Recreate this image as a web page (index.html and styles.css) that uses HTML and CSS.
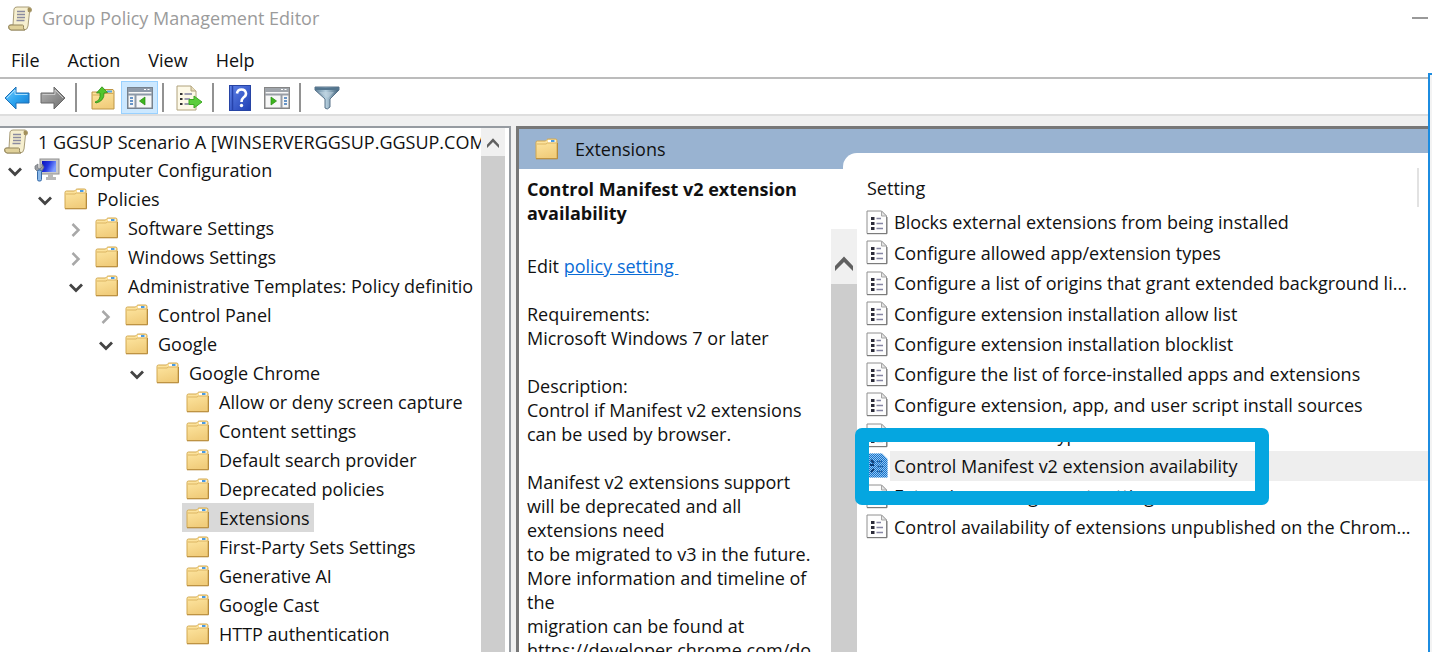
FILE: index.html
```html
<!DOCTYPE html>
<html lang="en">
<head>
<meta charset="utf-8">
<title>Group Policy Management Editor</title>
<link rel="stylesheet" href="styles.css">
</head>
<body>
<svg class="defs" aria-hidden="true">
  <defs>
    <linearGradient id="g-folder" x1="0" y1="0" x2="0.3" y2="1"><stop offset="0" stop-color="#ffe9a6"/><stop offset="1" stop-color="#f1cd7c"/></linearGradient>
    <linearGradient id="g-blue" x1="0" y1="0" x2="1" y2="1"><stop offset="0" stop-color="#7fd0ff"/><stop offset=".5" stop-color="#2da5f0"/><stop offset="1" stop-color="#1478cc"/></linearGradient>
    <linearGradient id="g-gray" x1="0" y1="0" x2="1" y2="1"><stop offset="0" stop-color="#b5b5b5"/><stop offset="1" stop-color="#6d6d6d"/></linearGradient>
    <linearGradient id="g-help" x1="0" y1="0" x2="1" y2="1"><stop offset="0" stop-color="#5f83e8"/><stop offset="1" stop-color="#1f3fb4"/></linearGradient>
    <linearGradient id="g-screen" x1="0" y1="0" x2="1" y2="0.4"><stop offset="0" stop-color="#0a12b8"/><stop offset=".5" stop-color="#2336e0"/><stop offset="1" stop-color="#7e9cff"/></linearGradient>
    <linearGradient id="g-funnel" x1="0" y1="0" x2="1" y2="0"><stop offset="0" stop-color="#5d7f98"/><stop offset=".45" stop-color="#b7d0df"/><stop offset="1" stop-color="#3f6079"/></linearGradient>
    <pattern id="p-dots" width="2" height="2" patternUnits="userSpaceOnUse"><rect width="1" height="1" fill="#1673cc"/><rect x="1" y="1" width="1" height="1" fill="#1673cc"/></pattern>
  </defs>
  <symbol id="folder" viewBox="0 0 23 22">
    <path d="M1 4.500Q1 3 2.500 3H10.500L12 1.500Q12.500 1 13.500 1H20.500Q22 1 22 2.500V20.500H1Z" fill="url(#g-folder)" stroke="#d2a850"/>
    <rect x="13" y="2" width="7.500" height="2.500" fill="#fff"/><rect x="16" y="2" width="3.500" height="2" fill="#4b9be0"/>
    <path d="M2 6H11L12.500 5H21.500" fill="none" stroke="#dcb563"/>
    <path d="M1 20.800H22.500V5" fill="none" stroke="#b58b3e"/>
  </symbol>
  <symbol id="scroll" viewBox="0 0 24 25">
    <path d="M6 3Q6.500 1 9 1H21Q23.500 1.500 23.500 4T21.500 6L20 20Q19.500 24 16 24H3Q.5 23.500.5 21T3 19H5Z" fill="#f6efcf" stroke="#a89c78"/>
    <path d="M.8 20.500Q1 19 3 19H14.500Q16 19 15.500 21.500Q15.300 23.500 17 24H3Q.5 23.500.8 20.500Z" fill="#e0d19a" stroke="#94865c"/>
    <path d="M20 1.500Q19 3 20 6H21.500Q23.500 5.500 23.300 3.500T20 1.500Z" fill="#a3905a"/>
    <path d="M9 5.500H17M9 8.500H17M9 11.500H17M8.500 14.500H16.500" stroke="#8b8ba0" stroke-width="1.300"/>
  </symbol>
  <symbol id="computer" viewBox="0 0 26 24">
    <rect x="6" y="1" width="19" height="15" fill="#c9c9c9" stroke="#8f8f8f"/>
    <rect x="8" y="3" width="14" height="11" fill="url(#g-screen)"/>
    <path d="M14 16H19V19H22V22H12V19H14Z" fill="#b8b8b8"/>
    <path d="M1 8L4 6V10L6 11L8 9V6L10 9L8 13H3L1 11Z" fill="#9b9ea3" stroke="#6c7076" stroke-width=".7"/>
    <rect x="3.500" y="12" width="4" height="11" rx="1.500" fill="#8bb9ea" stroke="#356aa8"/>
  </symbol>
  <symbol id="policy" viewBox="0 0 22 25">
    <path d="M1 1H15.500L20.500 6V23.500H1Z" fill="#fdfdfd" stroke="#909090"/>
    <path d="M15.500 1V6H20.500Z" fill="#e4e4e4" stroke="#a6a6a6"/>
    <path d="M1 23.700H21V7" fill="none" stroke="#777"/>
    <path d="M5 7H8.500V10H5ZM5 12H8.500V15H5ZM5 17H8.500V20H5Z" fill="#2c2c3a"/>
    <path d="M10.500 8.500H15M10.500 13.500H17M10.500 18.500H17" stroke="#8686a4" stroke-width="1.500"/>
  </symbol>
  <symbol id="policy-selected" viewBox="0 0 22 25">
    <path d="M.5.5H16L21.500 6V24.500H.5Z" fill="#93c5f0"/><path d="M.5.5H16L21.500 6V24.500H.5Z" fill="url(#p-dots)"/>
    <path d="M5 7L8 10M4 12H8M5 19L8 16" stroke="#0b3c74" stroke-width="2"/>
    <path d="M11 8.500H16M11 13.500H17M11 18.500H17" stroke="#2767a8" stroke-width="1.500"/>
  </symbol>
  <symbol id="down" viewBox="0 0 14 10"><path d="M1 1.500L7 7.500L13 1.500" fill="none" stroke="#444" stroke-width="2.800"/></symbol>
  <symbol id="right" viewBox="0 0 10 14"><path d="M1.500 1L7.500 7L1.500 13" fill="none" stroke="#a8a8a8" stroke-width="2.500"/></symbol>
  <symbol id="up" viewBox="0 0 18 15"><path d="M0 10L9 .5L18 10V15L9 6L0 15Z" fill="#606060"/></symbol>
</svg>

<div class="window">
  <header class="titlebar">
    <svg class="ico-scroll"><use href="#scroll"/></svg>
    <h1 class="title">Group Policy Management Editor</h1>
    <button class="minimize" aria-label="Minimize"></button>
  </header>

  <nav class="menubar">
    <button class="menu">File</button>
    <button class="menu">Action</button>
    <button class="menu">View</button>
    <button class="menu">Help</button>
  </nav>

  <div class="toolbar">
    <button class="tool first" aria-label="Back"><svg width="26" height="24" viewBox="0 0 26 24"><path d="M1 12L12 1V7H25V17H12V23Z" fill="url(#g-blue)" stroke="#1d6fb5" stroke-linejoin="round"/><path d="M3 12L11 4V8.500H23.500" fill="none" stroke="#a6defd"/></svg></button>
    <button class="tool" aria-label="Forward"><svg width="26" height="24" viewBox="0 0 26 24"><path d="M25 12L14 1V7H1V17H14V23Z" fill="url(#g-gray)" stroke="#686868" stroke-linejoin="round"/><path d="M2.500 8.500H15V4L23 12" fill="none" stroke="#c9c9c9"/></svg></button>
    <span class="sep"></span>
    <button class="tool" aria-label="Up one level"><svg width="24" height="24" viewBox="0 0 24 24"><path d="M1 6H11L12.500 3.500H22L23 5V23H1Z" fill="url(#g-folder)" stroke="#bd9545"/><rect x="16" y="4.500" width="5" height="2" fill="#5aa5e0"/><path d="M1.500 9H12L13 7.500H22.500" fill="none" stroke="#d4ab59"/><path d="M4 16Q10 14.500 9 7H5.500L11 .8L16.500 6.500L13 7Q13.500 15 5 17Z" fill="#51c62c" stroke="#2c8d17" stroke-width=".8"/></svg></button>
    <button class="tool pressed" aria-label="Show or hide console tree"><svg width="26" height="22" viewBox="0 0 26 22"><rect x=".75" y=".75" width="24.500" height="20.500" fill="#f7f7f7" stroke="#77828e" stroke-width="1.500"/><path d="M1 1H25V5H1Z" fill="#8d99a8"/><path d="M17 2.500H19M20.500 2.500H22.500" stroke="#fff"/><path d="M1 7.500H25M8.500 8V21" stroke="#8d99a8" stroke-width="2"/><path d="M3 11H6M3 14H6M3 17H6" stroke="#3a76b8" stroke-width="1.500"/><path d="M18 10V18L12.500 14Z" fill="#3db51e" stroke="#278b0f" stroke-width=".7"/></svg></button>
    <span class="sep"></span>
    <button class="tool" aria-label="Export list"><svg width="27" height="26" viewBox="0 0 27 26"><path d="M1 1H15L20 6V25H1Z" fill="#fdf9e7" stroke="#b0a27c"/><path d="M15 1V6H20" fill="#e7ddba" stroke="#b0a27c"/><path d="M4 9H6.500M4 14H6.500M4 19H6.500" stroke="#333" stroke-width="2"/><path d="M8.500 9H16M8.500 14H14M8.500 19H14" stroke="#8080a0" stroke-width="1.500"/><path d="M13 14.500H18V11L26 17L18 23V19.500H13Z" fill="#5bce3b" stroke="#3da823"/></svg></button>
    <span class="sep"></span>
    <button class="tool" aria-label="Help"><svg width="22" height="26" viewBox="0 0 22 26"><rect x=".5" y=".5" width="21" height="25" fill="url(#g-help)" stroke="#2744a4"/><path d="M3.500 1V25" stroke="#2643ab" stroke-width="1.500"/><path d="M8 8.500Q8.500 4.500 12.500 4.500T17 8.500Q17 11 14.500 12.500Q12.500 14 12.500 17" fill="none" stroke="#fff" stroke-width="2.600"/><circle cx="12.500" cy="20.500" r="1.700" fill="#fff"/></svg></button>
    <button class="tool" aria-label="Show or hide action pane"><svg width="26" height="22" viewBox="0 0 26 22"><rect x=".75" y=".75" width="24.500" height="20.500" fill="#f7f7f7" stroke="#858585" stroke-width="1.500"/><path d="M1 1H25V5H1Z" fill="#a0a5ab"/><path d="M17 2.500H19M20.500 2.500H22.500" stroke="#fff"/><path d="M1 7.500H25M17.500 8V21" stroke="#999ea5" stroke-width="2"/><path d="M20 11H23M20 14H23M20 17H23" stroke="#3a76b8" stroke-width="1.500"/><path d="M7 10V18L12.500 14Z" fill="#3db51e" stroke="#278b0f" stroke-width=".7"/></svg></button>
    <span class="sep"></span>
    <button class="tool" aria-label="Filter"><svg width="26" height="24" viewBox="0 0 26 24"><path d="M1 1H25V4L16 13V21Q13 24.500 11 22V13L1 4Z" fill="url(#g-funnel)" stroke="#587289"/><path d="M1 1.500H25V4H1Z" fill="#53758e"/><path d="M5 6H20L14 12Z" fill="#c5d8e4" opacity=".5"/></svg></button>
  </div>

  <main class="panes">
    <section class="tree-pane">
      <ul class="tree">
        <li class="row root"><span class="node"><svg class="ico-scroll"><use href="#scroll"/></svg>1 GGSUP Scenario A [WINSERVERGGSUP.GGSUP.COM</span></li>
        <li class="row"><button class="toggle" aria-label="Collapse"><svg class="chev-down"><use href="#down"/></svg></button><span class="node"><svg class="ico-computer"><use href="#computer"/></svg>Computer Configuration</span></li>
        <li class="row l1"><button class="toggle" aria-label="Collapse"><svg class="chev-down"><use href="#down"/></svg></button><span class="node"><svg class="ico-folder"><use href="#folder"/></svg>Policies</span></li>
        <li class="row l2"><button class="toggle" aria-label="Expand"><svg class="chev-right"><use href="#right"/></svg></button><span class="node"><svg class="ico-folder"><use href="#folder"/></svg>Software Settings</span></li>
        <li class="row l2"><button class="toggle" aria-label="Expand"><svg class="chev-right"><use href="#right"/></svg></button><span class="node"><svg class="ico-folder"><use href="#folder"/></svg>Windows Settings</span></li>
        <li class="row l2"><button class="toggle" aria-label="Collapse"><svg class="chev-down"><use href="#down"/></svg></button><span class="node"><svg class="ico-folder"><use href="#folder"/></svg>Administrative Templates: Policy definitio</span></li>
        <li class="row l3"><button class="toggle" aria-label="Expand"><svg class="chev-right"><use href="#right"/></svg></button><span class="node"><svg class="ico-folder"><use href="#folder"/></svg>Control Panel</span></li>
        <li class="row l3"><button class="toggle" aria-label="Collapse"><svg class="chev-down"><use href="#down"/></svg></button><span class="node"><svg class="ico-folder"><use href="#folder"/></svg>Google</span></li>
        <li class="row l4"><button class="toggle" aria-label="Collapse"><svg class="chev-down"><use href="#down"/></svg></button><span class="node"><svg class="ico-folder"><use href="#folder"/></svg>Google Chrome</span></li>
        <li class="row l5"><span class="node"><svg class="ico-folder"><use href="#folder"/></svg>Allow or deny screen capture</span></li>
        <li class="row l5"><span class="node"><svg class="ico-folder"><use href="#folder"/></svg>Content settings</span></li>
        <li class="row l5"><span class="node"><svg class="ico-folder"><use href="#folder"/></svg>Default search provider</span></li>
        <li class="row l5"><span class="node"><svg class="ico-folder"><use href="#folder"/></svg>Deprecated policies</span></li>
        <li class="row l5"><span class="node selected"><svg class="ico-folder"><use href="#folder"/></svg>Extensions</span></li>
        <li class="row l5"><span class="node"><svg class="ico-folder"><use href="#folder"/></svg>First-Party Sets Settings</span></li>
        <li class="row l5"><span class="node"><svg class="ico-folder"><use href="#folder"/></svg>Generative AI</span></li>
        <li class="row l5"><span class="node"><svg class="ico-folder"><use href="#folder"/></svg>Google Cast</span></li>
        <li class="row l5"><span class="node"><svg class="ico-folder"><use href="#folder"/></svg>HTTP authentication</span></li>
        <li class="row l5"><span class="node"><svg class="ico-folder"><use href="#folder"/></svg></span></li>
      </ul>
      <div class="scrollbar">
        <button class="scroll-up" aria-label="Scroll up"><svg><use href="#up"/></svg></button>
        <div class="thumb"></div>
      </div>
    </section>

    <section class="detail-pane">
      <header class="detail-head"><svg class="ico-folder"><use href="#folder"/></svg><h2>Extensions</h2></header>
      <div class="detail-body">
        <article class="info">
          <h3>Control Manifest v2 extension availability</h3>
          <p class="edit">Edit <a href="#policy-setting">policy setting&nbsp;</a></p>
          <p>Requirements:<br>Microsoft Windows 7 or later</p>
          <p>Description:<br>Control if Manifest v2 extensions<br>can be used by browser.</p>
          <p>Manifest v2 extensions support<br>will be deprecated and all<br>extensions need<br>to be migrated to v3 in the future.<br>More information and timeline of<br>the<br>migration can be found at<br>https://developer.chrome.com/do</p>
        </article>
        <div class="info-scroll">
          <button class="scroll-up" aria-label="Scroll description up"><svg><use href="#up"/></svg></button>
          <div class="thumb"></div>
        </div>
        <div class="list">
          <table class="settings">
            <colgroup><col class="col-mark"><col></colgroup>
            <thead><tr><th colspan="2">Setting</th></tr></thead>
            <tbody>
              <tr><td class="mark"><svg><use href="#policy"/></svg></td><td>Blocks external extensions from being installed</td></tr>
              <tr><td class="mark"><svg><use href="#policy"/></svg></td><td>Configure allowed app/extension types</td></tr>
              <tr><td class="mark"><svg><use href="#policy"/></svg></td><td>Configure a list of origins that grant extended background li...</td></tr>
              <tr><td class="mark"><svg><use href="#policy"/></svg></td><td>Configure extension installation allow list</td></tr>
              <tr><td class="mark"><svg><use href="#policy"/></svg></td><td>Configure extension installation blocklist</td></tr>
              <tr><td class="mark"><svg><use href="#policy"/></svg></td><td>Configure the list of force-installed apps and extensions</td></tr>
              <tr><td class="mark"><svg><use href="#policy"/></svg></td><td>Configure extension, app, and user script install sources</td></tr>
              <tr><td class="mark"><svg><use href="#policy"/></svg></td><td>Blocklist for install types of extensions</td></tr>
              <tr><td class="mark"><svg><use href="#policy-selected"/></svg><span class="callout"></span></td><td class="current">Control Manifest v2 extension availability</td></tr>
              <tr><td class="mark"><svg><use href="#policy"/></svg></td><td>Extension management settings</td></tr>
              <tr><td class="mark"><svg><use href="#policy"/></svg></td><td>Control availability of extensions unpublished on the Chrom...</td></tr>
            </tbody>
          </table>
        </div>
      </div>
    </section>
  </main>
  <aside class="behind" aria-hidden="true"></aside>
</div>
</body>
</html>
```
FILE: styles.css
```css
* { box-sizing: border-box; }

body {
  margin: 0;
  background: #fff;
  color: #111;
  font: 18px/24px "Open Sans", "Noto Sans", sans-serif;
}

h1, h2, h3, p, ul { margin: 0; padding: 0; font-size: inherit; font-weight: 400; }
button { padding: 0; border: 0; background: none; color: inherit; font: inherit; }
svg { display: block; flex: none; }
.defs { position: absolute; width: 0; height: 0; }

.window {
  position: relative;
  display: flex;
  flex-direction: column;
  height: 100vh;
  overflow: hidden;
}

.titlebar { display: flex; align-items: center; height: 36px; padding: 0 4px 0 8px; }
.title { flex: 1; margin-left: 10px; color: #9b9b9b; }
.minimize { width: 16px; height: 2px; background: #999; }

.ico-scroll { width: 24px; height: 25px; }
.ico-folder { width: 23px; height: 22px; }
.ico-computer { width: 26px; height: 24px; }

.menubar { display: flex; gap: 28px; height: 43px; padding: 6px 11px 0; border-bottom: 2px solid #bcbcbc; }

.toolbar {
  display: flex;
  align-items: center;
  height: 37px;
  padding-top: 2px;
  border-bottom: 2px solid #dedede;
}
.tool { display: flex; align-items: center; justify-content: center; width: 37px; height: 33px; }
.tool.first { width: 34px; }
.pressed { background: #cce8ff; border: 1px solid #99d1ff; }
.sep { width: 2px; height: 29px; margin: 0 7px 0 4px; background: #929292; }

.panes { display: flex; flex: 1; min-height: 0; gap: 5px; padding: 10px 3px 0 0; background: #f0f0f0; }

.tree-pane {
  display: flex;
  width: 36%;
  max-width: 511px;
  border: solid #969ba1;
  border-width: 2px 2px 0 0;
  padding-right: 4px;
  background: #fff;
}
.tree { flex: 1; min-width: 0; overflow: hidden; list-style: none; white-space: nowrap; }
.row { display: flex; height: 29px; }
.root { height: 27px; }
.l1 { padding-left: 30px; }
.l2 { padding-left: 61px; }
.l3 { padding-left: 91px; }
.l4 { padding-left: 122px; }
.l5 { padding-left: 182px; }
.toggle { display: flex; align-items: center; justify-content: center; flex: none; width: 30px; padding-top: 4px; }
.chev-down { width: 14px; height: 10px; }
.chev-right { width: 10px; height: 14px; }
.node { display: flex; align-items: center; gap: 10px; padding: 0 4px; }
.node .ico-computer { margin-right: -2px; }
.selected { background: #d9d9d9; }

.scrollbar { flex: none; width: 24px; padding-top: 2px; display: flex; flex-direction: column; background: #f0f0f0; }
.scroll-up { display: flex; align-items: center; justify-content: center; flex: none; width: 100%; }
.scrollbar .scroll-up { height: 26px; }
.scrollbar .scroll-up svg { width: 12px; height: 10px; }
.thumb { flex: 1; background: #cdcdcd; }

.detail-pane {
  display: flex;
  flex: 1;
  flex-direction: column;
  min-width: 0;
  border: solid #777;
  border-width: 3px 0 0 3px;
  background: #fff;
}
.detail-head { display: flex; align-items: center; gap: 17px; flex: none; height: 40px; padding: 0 16px; background: #99b3d1; }

.detail-body { display: flex; flex: 1; min-height: 0; }
.info { flex: none; width: 312px; padding: 8px 0 0 8px; overflow: hidden; white-space: nowrap; }
.info h3 { width: 290px; font-weight: 700; white-space: normal; }
.info p { margin-bottom: 24px; }
.info .edit { margin-top: 29px; }
.info a { color: #0a6cd6; }

.info-scroll {
  position: relative;
  z-index: 1;
  display: flex;
  flex-direction: column;
  flex: none;
  width: 26px;
  margin-top: 60px;
  background: #f0f0f0;
}
.info-scroll .scroll-up { height: 55px; padding-top: 14px; }
.info-scroll .scroll-up svg { width: 18px; height: 15px; }

.list {
  flex: 1;
  min-width: 0;
  margin: -16px 0 0 -14px;
  padding: 15px 0 0 14px;
  border-top-left-radius: 14px;
  background: #fff;
}
.settings { width: 100%; height: 374px; border-collapse: collapse; white-space: nowrap; table-layout: fixed; }
.settings thead { background: linear-gradient(#e2e2e2, #e2e2e2) right 10px top / 2px 100% no-repeat; }
.settings th { height: 39px; padding: 0 0 0 10px; text-align: left; font-weight: 400; }
.settings td { padding: 0 0 0 4px; }
.col-mark { width: 33px; }
.settings .mark { position: relative; padding: 0 0 0 9px; }
.mark svg { width: 22px; height: 25px; }
.current { background: #eee; }

.callout {
  position: absolute;
  z-index: 2;
  top: -23px;
  left: -2px;
  width: 414px;
  height: 77px;
  border: 14px solid #05a6e0;
  border-radius: 7px;
}

.behind {
  position: absolute;
  z-index: 3;
  top: 73px;
  right: 0;
  bottom: 0;
  width: 4px;
  border: solid #1c8ce0;
  border-width: 2px 0 0 2px;
  background: #f3f3f3;
}
```
